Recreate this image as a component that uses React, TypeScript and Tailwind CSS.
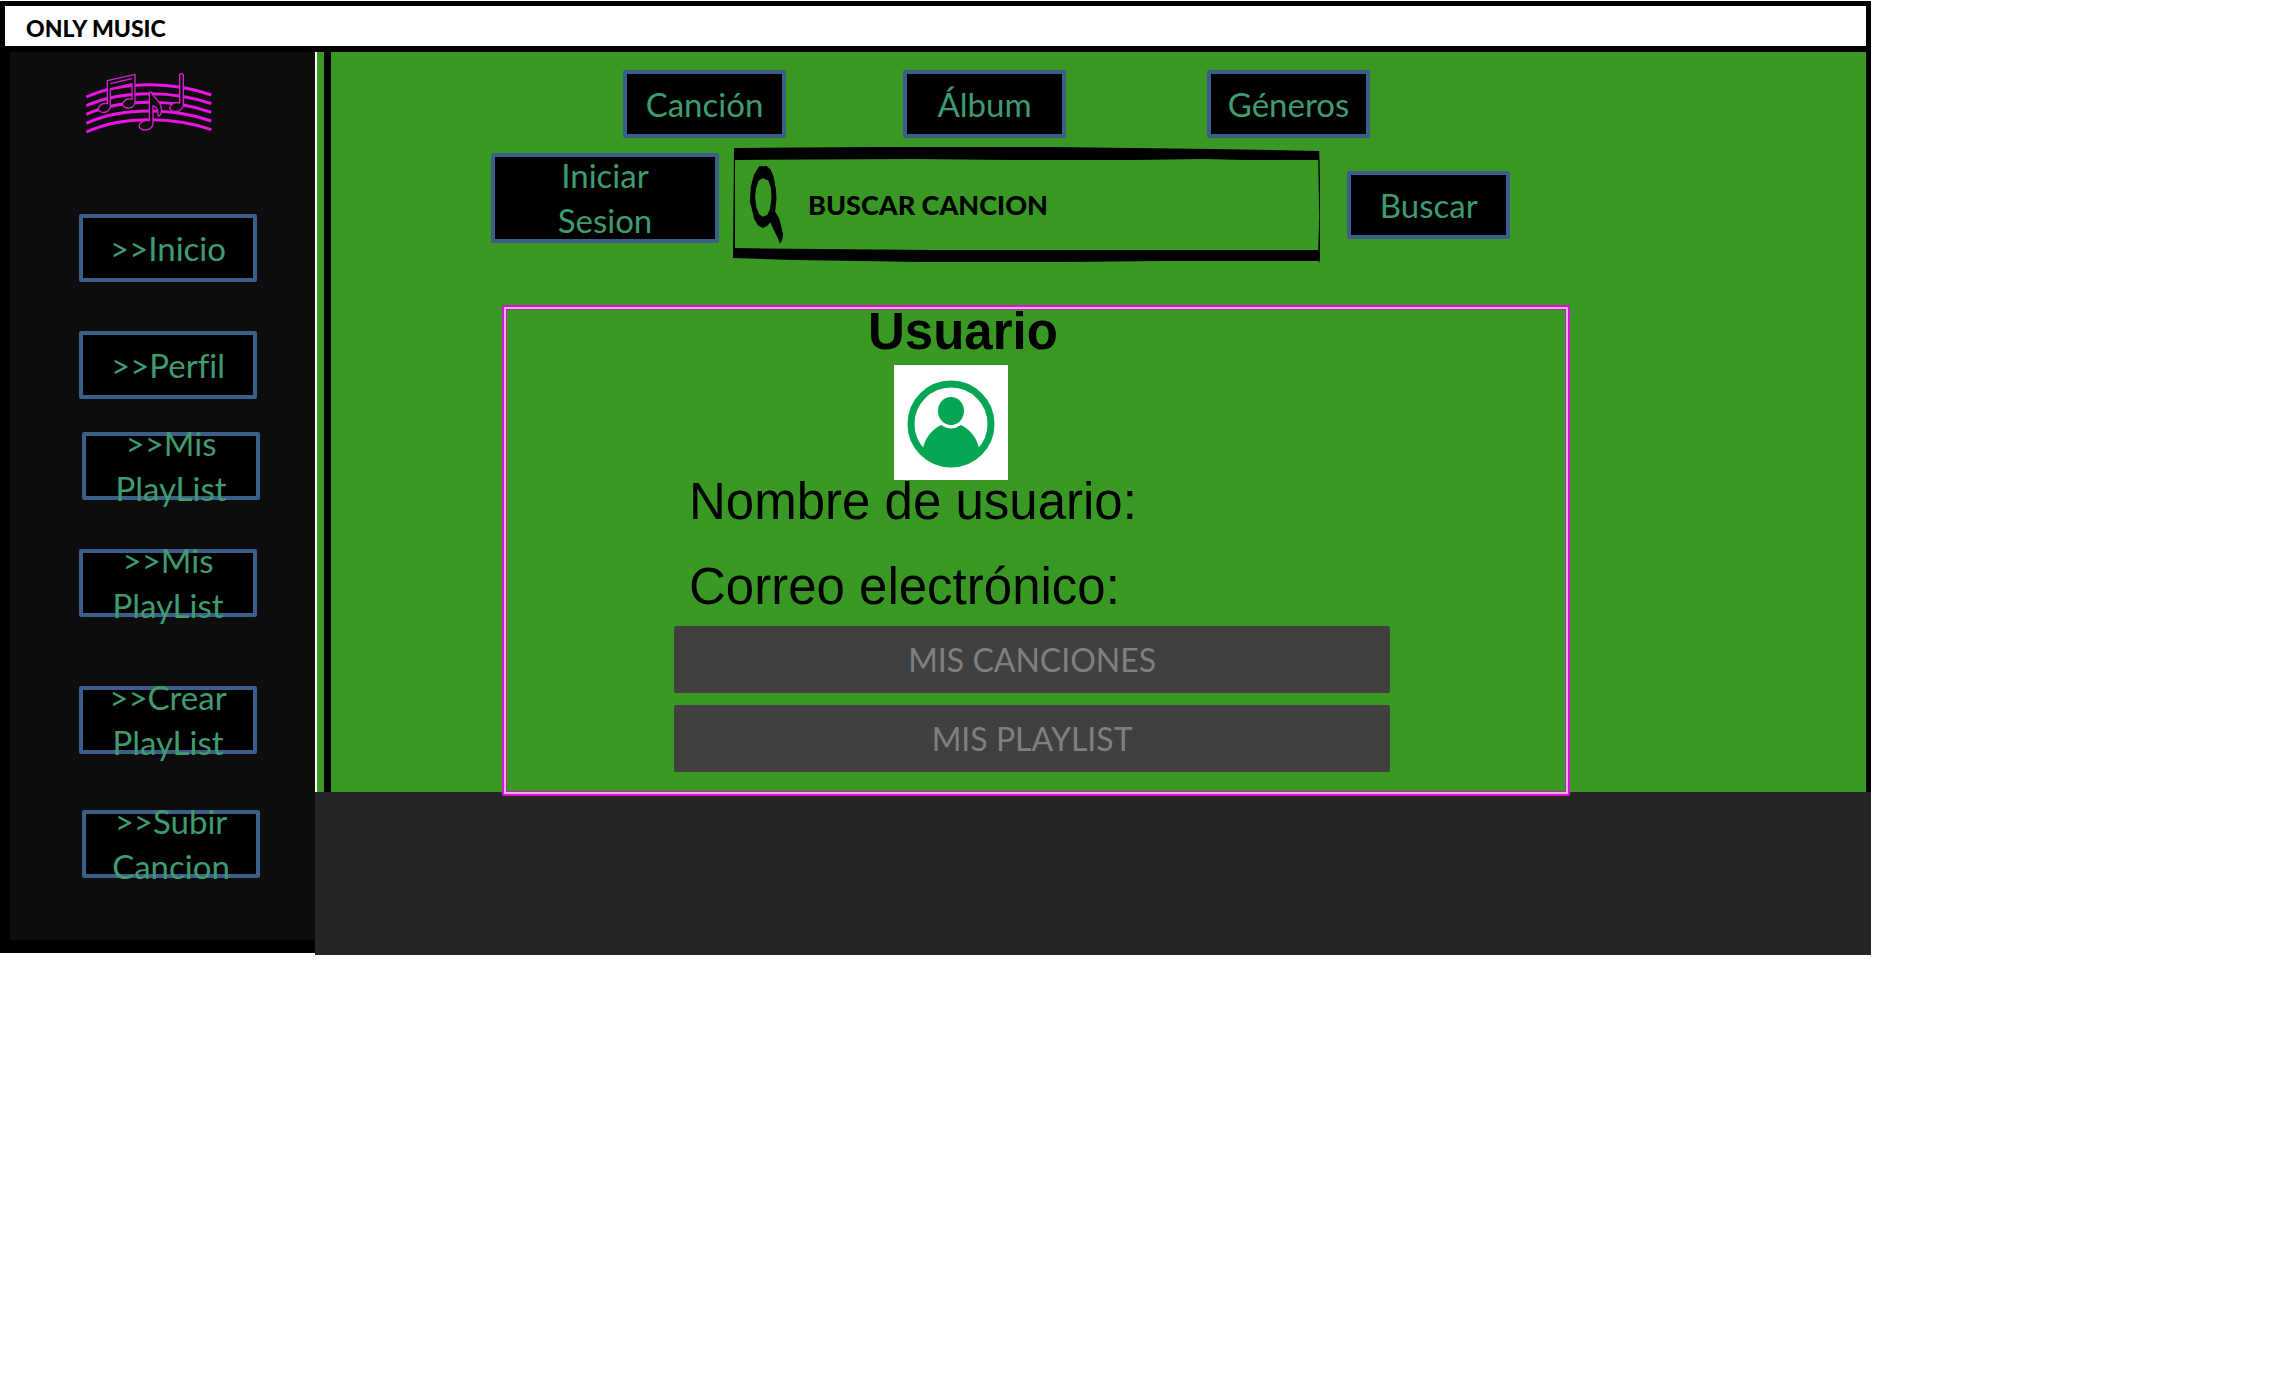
import React from "react";

type BoxButtonProps = {
  label: string;
  className: string;
};

function BoxButton({ label, className }: BoxButtonProps) {
  return (
    <button
      type="button"
      className={`flex shrink-0 items-center justify-center rounded-[2px] border-4 border-[#3b5f8a] bg-black text-center text-[33px] leading-[45px] text-[#3f9b70] ${className}`}
    >
      <span>{label}</span>
    </button>
  );
}

const sideItems = [
  { label: ">>Inicio", place: "" },
  { label: ">>Perfil", place: "mt-[49px]" },
  { label: ">>Mis PlayList", place: "mt-[33px] ml-[3px]" },
  { label: ">>Mis PlayList", place: "mt-[49px]" },
  { label: ">>Crear PlayList", place: "mt-[69px]" },
  { label: ">>Subir Cancion", place: "mt-14 ml-[3px]" },
];

function StaffLogo() {
  return (
    <svg viewBox="250 210 396 201" className="h-[67px] w-[132px]" fill="none" role="img" aria-label="Only Music">
      <g stroke="#ee12e6" strokeWidth="9">
        <path d="M260 291 Q340 254 450 254 Q550 254 635 285" />
        <path d="M260 317 Q340 281 450 281 Q550 281 635 311" />
        <path d="M260 343 Q340 307 450 307 Q550 307 635 337" />
        <path d="M260 370 Q340 333 450 333 Q550 333 635 363" />
        <path d="M260 396 Q340 359 450 359 Q550 359 635 389" />
      </g>
      <g stroke="#d81fd2" strokeWidth="4" fill="#0d0d0d" fillRule="evenodd" strokeLinejoin="round">
        <path d="M323 242 L406 223 L406 308 C404 319 394 325 383 324 C370 323 366 314 371 306 C377 298 388 295 397 298 L397 251 L332 266 L332 322 C328 333 319 338 309 337 C297 336 293 327 299 319 C305 311 315 309 323 311 Z" />
        <path d="M332 251 L397 236" />
        <path d="M540 224 Q545 218 551 224 L551 316 C548 328 538 335 525 334 C512 333 507 325 513 317 C519 309 531 307 540 309 Z" />
        <path d="M449 280 Q453 272 457 280 C460 291 484 303 485 326 C486 335 482 345 479 348 C474 347 474 343 475 340 C475 328 470 320 460 317 L460 372 C458 383 448 390 435 390 C421 389 415 381 420 372 C426 363 439 359 449 362 Z" />
      </g>
    </svg>
  );
}

function SearchGlyph() {
  return (
    <svg viewBox="840 340 104 240" className="h-20 w-[35px] shrink-0" aria-hidden="true">
      <path
        fillRule="evenodd"
        d="M870 344 L892 343 L904 353 L913 374 L920 410 L922 440 L918 480 L930 500 L942 548 L940 562 L933 576 L926 560 L914 535 L903 512 L895 522 L881 529 L866 521 L855 502 L848 472 L842 450 L845 405 L854 370 Z M880 380 L868 387 L861 410 L858 436 L862 468 L870 488 L881 495 L895 489 L903 470 L907 438 L905 407 L897 386 Z"
      />
    </svg>
  );
}

function SearchField() {
  return (
    <div className="relative flex h-[115px] min-w-0 flex-1 items-center pl-4">
      <svg
        viewBox="0 0 586 116"
        preserveAspectRatio="none"
        className="pointer-events-none absolute inset-0 h-full w-full"
        aria-hidden="true"
      >
        <path
          fillRule="evenodd"
          d="M1 1 L140 0 L320 0 L480 2 L585 4 L586 40 L586 116 L583 115 L430 115 L330 116 L190 116 L60 114 L0 112 Z M2 13 L2 102 L200 104 L584 104 L585 70 L584 13 L510 13 L470 12 L400 13 L280 13 L180 12 Z"
        />
      </svg>
      <SearchGlyph />
      <input
        type="text"
        aria-label="Buscar canción"
        placeholder="BUSCAR CANCION"
        className="ml-6 h-12 min-w-0 flex-1 bg-transparent pr-4 text-[27px] font-black text-black outline-none placeholder:text-black placeholder:opacity-100"
      />
    </div>
  );
}

function Avatar() {
  return (
    <svg viewBox="0 0 114 115" className="block h-[115px] w-[114px] bg-white" role="img" aria-label="Avatar">
      <circle cx="57" cy="59" r="40" fill="none" stroke="#04a653" strokeWidth="7" />
      <ellipse cx="57" cy="46" rx="13" ry="14" fill="#04a653" />
      <path
        fill="#04a653"
        d="M47 60 Q57 67 67 60 C77 65 83 74 85 83 C79 95 69 101 57 101 C45 101 35 95 29 83 C31 74 37 65 47 60 Z"
      />
    </svg>
  );
}

function WideButton({ label }: { label: string }) {
  return (
    <button
      type="button"
      className="h-[67px] w-full rounded-[2px] bg-[#404040] text-[32px] leading-[45px] text-[#7f7f7f]"
    >
      {label}
    </button>
  );
}

export default function App() {
  return (
    <div className="min-h-screen bg-white font-['Lato',sans-serif] text-black [font-variant-ligatures:none]">
      <div className="w-[82%] pt-px">
        <header className="flex h-[51px] items-center border-x-[5px] border-t-[5px] border-b-[6px] border-black bg-white px-[21px] pt-1">
          <h1 className="text-[23px] leading-8 font-black whitespace-nowrap">ONLY MUSIC</h1>
        </header>

        <div className="flex items-stretch">
          <aside className="w-[315px] shrink-0 self-start border-b-[13px] border-l-[10px] border-black bg-[#0d0d0d] pt-[18px] pb-[62px]">
            <div className="ml-[73px]">
              <StaffLogo />
            </div>
            <nav className="mt-[77px] ml-[69px] flex flex-col items-start" aria-label="Menú">
              {sideItems.map((item, i) => (
                <BoxButton key={i} label={item.label} className={`h-[68px] w-[178px] px-4 ${item.place}`} />
              ))}
            </nav>
          </aside>

          <div className="flex min-w-0 flex-1 flex-col">
            <main className="border-l-2 border-white bg-[#3a9924] pl-[7px]">
              <div className="h-[740px] border-r-[5px] border-l-[7px] border-black pt-[18px]">
                <div className="flex pl-[292px]">
                  <BoxButton label="Canción" className="h-[68px] w-[163px]" />
                  <BoxButton label="Álbum" className="ml-[117px] h-[68px] w-[163px]" />
                  <BoxButton label="Géneros" className="ml-[141px] h-[68px] w-[163px]" />
                </div>

                <form className="mt-[9px] flex items-start pr-[356px] pl-[160px]" onSubmit={(e) => e.preventDefault()}>
                  <BoxButton label="Iniciar Sesion" className="mt-1.5 mr-3.5 h-[90px] w-[228px] px-12" />
                  <SearchField />
                  <BoxButton label="Buscar" className="mt-6 ml-[27px] h-[68px] w-[163px]" />
                </form>

                <section className="relative mt-[43px] mr-[296px] ml-[171px] h-[491px] rounded-[2px] border-2 border-[#d916cf] font-['Liberation_Sans',sans-serif] shadow-[inset_0_0_0_2px_#fba6f3,inset_0_0_0_3px_#a3359a]">
                  <h2 className="pl-[364px] text-[51px] leading-[50px] font-bold">Usuario</h2>
                  <div className="mt-2 pl-[390px]">
                    <Avatar />
                  </div>
                  <div className="pl-[185px] text-[51px] leading-[44px]">
                    <p>Nombre de usuario:</p>
                    <p className="mt-[41px]">Correo electrónico:</p>
                  </div>
                  <div className="mt-[17px] mr-[178px] ml-[170px] flex flex-col gap-3 font-['Lato',sans-serif]">
                    <WideButton label="MIS CANCIONES" />
                    <WideButton label="MIS PLAYLIST" />
                  </div>
                </section>
              </div>
            </main>
            <footer className="h-[163px] bg-[#252525]" />
          </div>
        </div>
      </div>
    </div>
  );
}
